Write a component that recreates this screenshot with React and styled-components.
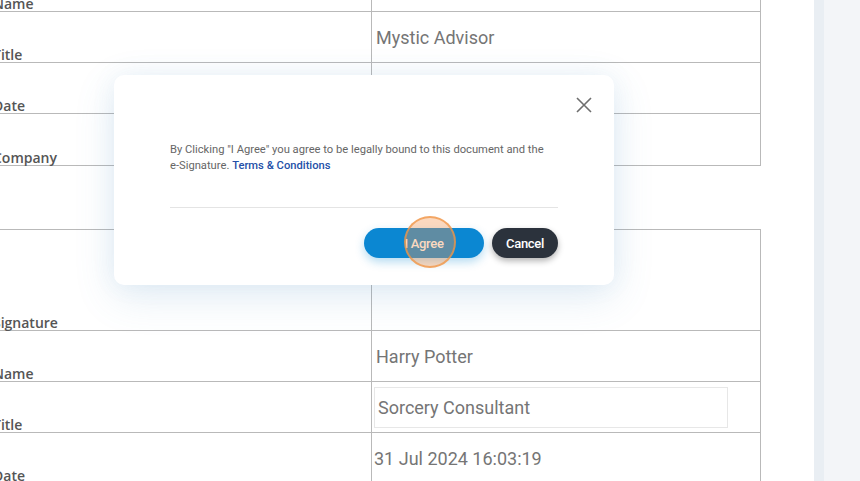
import React from 'react'
import styled, { createGlobalStyle } from 'styled-components'

const Global = createGlobalStyle`
  html, body { margin: 0; padding: 0; background: #fff; }
  body { width: 860px; height: 481px; overflow: hidden; font-family: Roboto, 'Liberation Sans', sans-serif; }
`

const Page = styled.div`
  display: flex;
  width: 860px;
  height: 481px;
  overflow: hidden;
`

const Document = styled.div`
  width: 814px;
  flex-shrink: 0;
  overflow: hidden;
  background: #fff;
`

const Sheet = styled.div`
  margin-top: -40px;
  margin-left: -12px;
  display: flex;
  flex-direction: column;
  gap: 63px;
`

const Table = styled.table`
  border-collapse: collapse;
  width: 773px;
  table-layout: fixed;
`

const Row = styled.tr`
  height: ${p => p.$h || 51}px;
`

const Label = styled.td`
  width: 378px;
  border: 1px solid #b9b9b9;
  vertical-align: bottom;
  padding: 0 0 0 4px;
  font-family: 'Open Sans', sans-serif;
  font-weight: 600;
  font-size: 14px;
  color: #555;
  line-height: 15px;
`

const Value = styled.td`
  border: 1px solid #b9b9b9;
  vertical-align: middle;
  padding: 1px 0 0 ${p => p.$pad ?? 4}px;
  font-size: 18px;
  color: #757575;
  font-family: Roboto, sans-serif;
`

const Field = styled.div`
  width: 349px;
  height: 39px;
  border: 1px solid #e7e7e7;
  display: flex;
  align-items: center;
  padding-left: 3px;
`

const Sidebar = styled.div`
  flex: 1;
  background: #f3f5f8;
  border-left: 10px solid #e9eef3;
`

const Modal = styled.div`
  position: absolute;
  left: 114px;
  top: 75px;
  width: 500px;
  height: 210px;
  box-sizing: border-box;
  background: #fff;
  border-radius: 10px;
  box-shadow: 0 12px 40px rgba(80, 140, 190, 0.16), 0 0 24px rgba(80, 140, 190, 0.08);
  padding: 67px 56px 27px;
  display: flex;
  flex-direction: column;
`

const Close = styled.button`
  position: absolute;
  top: 22px;
  right: 22px;
  width: 16px;
  height: 16px;
  padding: 0;
  border: 0;
  background: none;
  display: flex;
`

const Message = styled.p`
  margin: 0;
  font-size: 11.2px;
  line-height: 16px;
  color: #666;
`

const NoWrap = styled.span`
  white-space: nowrap;
`

const Link = styled.a`
  color: #2450a8;
  font-weight: 500;
  text-decoration: none;
`

const Divider = styled.hr`
  margin: 33px 0 20px;
  border: 0;
  border-top: 1px solid #e4e4e4;
`

const Actions = styled.div`
  display: flex;
  justify-content: flex-end;
  gap: 8px;
`

const Button = styled.button`
  position: relative;
  height: 30px;
  width: ${p => p.$w}px;
  border: 0;
  border-radius: 15px;
  background: ${p => (p.$dark ? '#2b323c' : '#0b87d2')};
  color: #fff;
  font-family: Roboto, sans-serif;
  font-weight: 500;
  font-size: 13px;
  letter-spacing: -0.3px;
  box-shadow: ${p => (p.$dark ? '0 3px 6px rgba(0,0,0,0.3)' : '0 4px 10px rgba(11,135,210,0.3)')};
`

const ClickMark = styled.span`
  position: absolute;
  left: 40px;
  top: -12px;
  width: 52px;
  height: 52px;
  border-radius: 50%;
  background: rgba(245, 150, 80, 0.36);
  border: 2px solid rgba(240, 150, 70, 0.75);
  box-sizing: border-box;
`

export default function App() {
  return (
    <>
      <Global />
      <Page>
        <Document>
          <Sheet>
            <Table>
              <tbody>
                <Row><Label>Name</Label><Value /></Row>
                <Row><Label>Title</Label><Value>Mystic Advisor</Value></Row>
                <Row><Label>Date</Label><Value /></Row>
                <Row $h={52}><Label>Company</Label><Value /></Row>
              </tbody>
            </Table>
            <Table>
              <tbody>
                <Row $h={101}><Label>Signature</Label><Value /></Row>
                <Row><Label>Name</Label><Value>Harry Potter</Value></Row>
                <Row><Label>Title</Label><Value $pad={2}><Field>Sorcery Consultant</Field></Value></Row>
                <Row><Label>Date</Label><Value $pad={2}>31 Jul 2024 16:03:19</Value></Row>
              </tbody>
            </Table>
          </Sheet>
        </Document>
        <Sidebar />
      </Page>
      <Modal>
        <Close aria-label='Close'>
          <svg width='16' height='16' viewBox='0 0 16 16'>
            <path d='M1 1L15 15M15 1L1 15' stroke='#6e6e6e' strokeWidth='1.6' />
          </svg>
        </Close>
        <Message>
          By Clicking "I Agree" you agree to be legally bound to this document and the{' '}
          <NoWrap>e-Signature.</NoWrap>{' '}
          <Link href='#'>Terms &amp; Conditions</Link>
        </Message>
        <Divider />
        <Actions>
          <Button $w={120}>
            I Agree
            <ClickMark />
          </Button>
          <Button $w={66} $dark>Cancel</Button>
        </Actions>
      </Modal>
    </>
  )
}
